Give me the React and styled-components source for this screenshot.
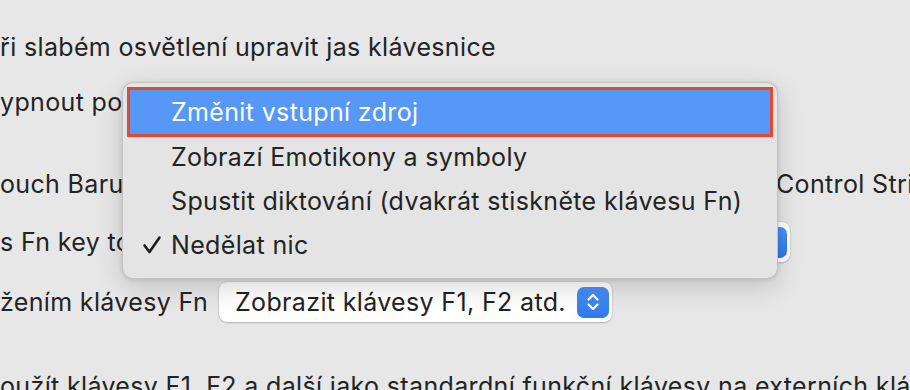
import React from "react";
import styled, { createGlobalStyle } from "styled-components";

const GlobalStyle = createGlobalStyle`
  html, body {
    margin: 0;
    padding: 0;
    background: #e7e7e7;
  }
  body {
    font-family: Inter, "Noto Sans", sans-serif;
    -webkit-font-smoothing: antialiased;
  }
`;

const menuItems = [
  { label: "Změnit vstupní zdroj", highlighted: true },
  { label: "Zobrazí Emotikony a symboly" },
  { label: "Spustit diktování (dvakrát stiskněte klávesu Fn)" },
  { label: "Nedělat nic", checked: true },
];

function Stepper() {
  return (
    <StepperBox>
      <svg width="16" height="22" viewBox="0 0 16 22" fill="none">
        <path
          d="M3.5 8.5 L8 4 L12.5 8.5"
          stroke="#fff"
          strokeWidth="2.3"
          strokeLinecap="round"
          strokeLinejoin="round"
        />
        <path
          d="M3.5 13.5 L8 18 L12.5 13.5"
          stroke="#fff"
          strokeWidth="2.3"
          strokeLinecap="round"
          strokeLinejoin="round"
        />
      </svg>
    </StepperBox>
  );
}

function CheckMark() {
  return (
    <CheckBox>
      <svg width="20" height="20" viewBox="0 0 20 20" fill="none">
        <path
          d="M2.5 10.5 L7.5 17 L17.5 2.5"
          stroke="#1c1c1c"
          strokeWidth="2.6"
          strokeLinecap="round"
          strokeLinejoin="round"
        />
      </svg>
    </CheckBox>
  );
}

function PopupMenu() {
  return (
    <Menu>
      {menuItems.map((item) => (
        <MenuItem key={item.label} $highlighted={item.highlighted}>
          {item.checked && <CheckMark />}
          {item.label}
        </MenuItem>
      ))}
    </Menu>
  );
}

export default function App() {
  return (
    <>
      <GlobalStyle />
      <Page>
        <Row $top={27}>
          <Label>ři slabém osvětlení upravit jas klávesnice</Label>
        </Row>
        <Row $top={15}>
          <Label>ypnout podsvícení klávesnice po nečinnosti</Label>
        </Row>
        <Row $top={42}>
          <LeftCell>
            <Label>ouch Baru zobrazuje</Label>
          </LeftCell>
          <Label>Control Strip</Label>
        </Row>
        <Row $top={18}>
          <Label $width={210}>s Fn key to</Label>
          <Select $width={562}>
            <SelectText>Nedělat nic</SelectText>
            <Stepper />
          </Select>
        </Row>
        <Row $top={20}>
          <Label $width={201}>žením klávesy Fn</Label>
          <Select $width={393}>
            <SelectText>Zobrazit klávesy F1, F2 atd.</SelectText>
            <Stepper />
          </Select>
        </Row>
        <Row $top={44}>
          <Label>
            oužít klávesy F1, F2 a další jako standardní funkční klávesy na
            externích klávesnicích
          </Label>
        </Row>
        <PopupMenu />
      </Page>
    </>
  );
}

const Page = styled.div`
  position: relative;
  width: 910px;
  height: 390px;
  overflow: hidden;
  background: #e7e7e7;
  color: #232323;
  font-size: 25px;
  letter-spacing: 0.35px;
`;

const Row = styled.div`
  display: flex;
  align-items: center;
  height: 40px;
  margin-top: ${(p) => p.$top}px;
  white-space: nowrap;
`;

const LeftCell = styled.div`
  width: 776px;
  flex: none;
  overflow: hidden;
`;

const Label = styled.span`
  flex: none;
  line-height: 30px;
  ${(p) => (p.$width ? `width: ${p.$width}px;` : "")}
  margin-right: ${(p) => (p.$width ? 18 : 0)}px;
`;

const Select = styled.div`
  flex: none;
  box-sizing: border-box;
  width: ${(p) => p.$width}px;
  height: 40px;
  display: flex;
  align-items: center;
  justify-content: space-between;
  padding: 0 3px 0 16px;
  background: #ffffff;
  border-radius: 8px;
  box-shadow: 0 0 0 0.5px rgba(0, 0, 0, 0.12), 0 1px 2px rgba(0, 0, 0, 0.18);
`;

const SelectText = styled.span`
  line-height: 30px;
  color: #222;
`;

const StepperBox = styled.div`
  width: 32px;
  height: 31px;
  border-radius: 7px;
  background: linear-gradient(#4a90f8, #2f77ee);
  display: flex;
  align-items: center;
  justify-content: center;
`;

const Menu = styled.div`
  position: absolute;
  left: 122px;
  top: 82px;
  width: 656px;
  box-sizing: border-box;
  padding: 7px 7px 11px;
  background: #e4e4e4;
  border-radius: 11px;
  border: 1px solid rgba(0, 0, 0, 0.14);
  box-shadow: 0 8px 26px rgba(0, 0, 0, 0.16), 0 1px 4px rgba(0, 0, 0, 0.1);
`;

const MenuItem = styled.div`
  position: relative;
  height: 44px;
  display: flex;
  align-items: center;
  padding-left: 41px;
  line-height: 30px;
  white-space: nowrap;
  color: ${(p) => (p.$highlighted ? "#ffffff" : "#232323")};
  background: ${(p) => (p.$highlighted ? "#5797f5" : "transparent")};
  box-shadow: ${(p) => (p.$highlighted ? "0 0 0 3px #e2492f" : "none")};
  margin-bottom: ${(p) => (p.$highlighted ? 1 : 0)}px;
`;

const CheckBox = styled.span`
  position: absolute;
  left: 12px;
  top: 12px;
  display: flex;
`;
